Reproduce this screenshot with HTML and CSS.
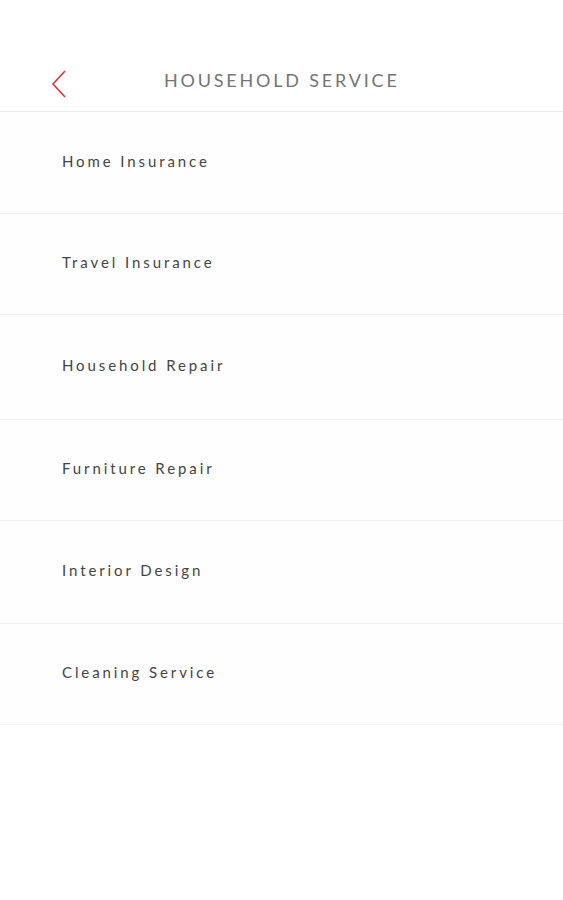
FILE: index.html
```html
<!DOCTYPE html>
<html lang="en">
<head>
  <meta charset="UTF-8">
  <title>Household Service</title>
  <meta name="viewport" content="width=device-width, initial-scale=1.0">
  <link rel="stylesheet" href="styles.css">
</head>
<body>
  <!-- ヘッダー -->
  <header class="top-bar">
    <button class="back-btn" aria-label="Back">
      <svg viewBox="0 0 18 30" fill="none" stroke="currentColor" stroke-width="1.6">
        <polyline points="15,2 3,15 15,28"></polyline>
      </svg>
    </button>
    <h1 class="top-title">HOUSEHOLD SERVICE</h1>
  </header>

  <!-- サービス一覧 -->
  <ul class="service-list">
    <li class="service-item">Home Insurance</li>
    <li class="service-item">Travel Insurance</li>
    <li class="service-item">Household Repair</li>
    <li class="service-item">Furniture Repair</li>
    <li class="service-item">Interior Design</li>
    <li class="service-item">Cleaning Service</li>
  </ul>
</body>
</html>
```

FILE: styles.css
```css
/* Reset */
* { margin: 0; padding: 0; box-sizing: border-box; }

html, body {
  font-family: Lato, "Open Sans", sans-serif;
  background: #fff;
  height: 100%;
}

/* ヘッダー */
.top-bar {
  height: 112px;
  display: flex;
  align-items: center;
  padding: 56px 0 0;
  border-bottom: 1px solid #ebebeb;
}

.back-btn {
  width: 18px;
  height: 30px;
  margin-left: 50px;
  background: none;
  border: none;
  color: #d9333b;
  cursor: pointer;
}

.back-btn svg {
  width: 18px;
  height: 30px;
  display: block;
}

.top-title {
  margin-left: 96px;
  margin-top: -8px;
  font-size: 18px;
  font-weight: 400;
  letter-spacing: 2.8px;
  color: #747474;
}

/* サービス一覧 */
.service-list {
  list-style: none;
}

.service-item {
  height: 102px;
  display: flex;
  align-items: center;
  padding: 0 0 4px 62px;
  border-bottom: 1px solid #f1f1f1;
  font-size: 15px;
  letter-spacing: 2.9px;
  color: #444;
  background: #fefefe;
}

.service-item:nth-child(2) { height: 101px; }
.service-item:nth-child(3) { height: 105px; }
.service-item:nth-child(4) { height: 101px; }
.service-item:nth-child(5) { height: 103px; }
.service-item:nth-child(6) { height: 101px; }
```
